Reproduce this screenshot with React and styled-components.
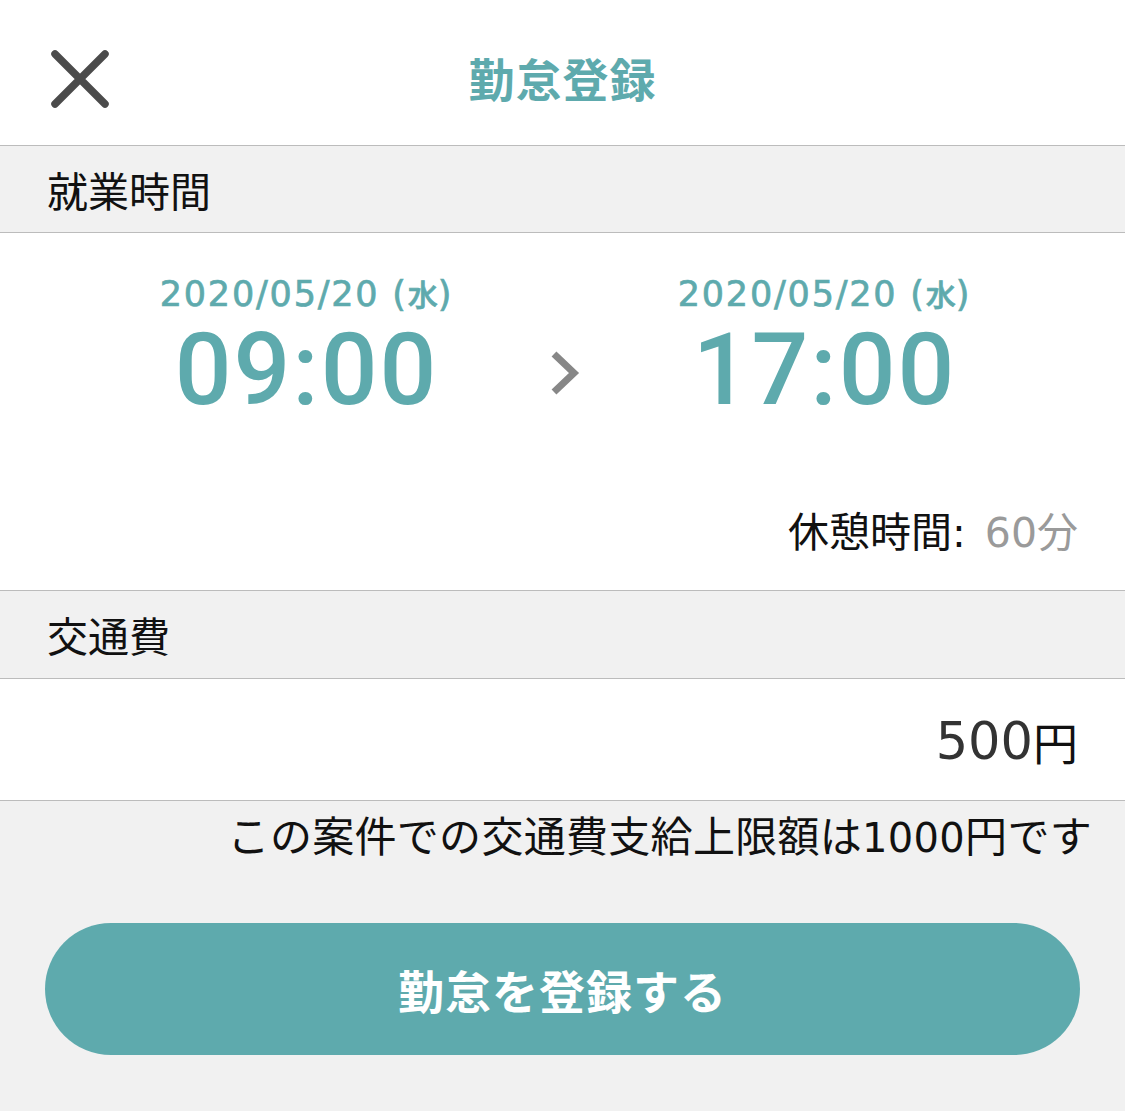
import React from "react";
import styled, { createGlobalStyle } from "styled-components";

const teal = "#5eaaad";
const line = "#bcbcbc";
const grayBg = "#f1f1f1";
const latin = `"DejaVu Sans", "Noto Sans CJK JP", sans-serif`;

const Global = createGlobalStyle`
  html, body { margin: 0; padding: 0; background: ${grayBg}; }
  body {
    font-family: "Noto Sans CJK JP", sans-serif;
    color: #111;
  }
  * { box-sizing: border-box; }
`;

const Page = styled.div`
  width: 1125px;
  min-height: 1111px;
  background: ${grayBg};
  display: flex;
  flex-direction: column;
`;

const Header = styled.header`
  height: 146px;
  background: #fff;
  border-bottom: 1px solid ${line};
  display: grid;
  grid-template-columns: 1fr auto 1fr;
  align-items: center;
  padding: 8px 0 0 51px;
`;

const CloseButton = styled.button`
  width: 58px;
  height: 58px;
  padding: 0;
  border: none;
  background: none;
  display: flex;
  margin-top: 4px;
`;

const Title = styled.h1`
  margin: 0 0 0 -51px;
  font-size: 46px;
  font-weight: 700;
  color: ${teal};
  letter-spacing: 1px;
  line-height: 1;
`;

const SectionHeader = styled.div`
  height: ${(p) => p.$h || 87}px;
  background: ${grayBg};
  border-bottom: 1px solid ${line};
  display: flex;
  align-items: center;
  padding-left: 47px;
  font-size: 41px;
  line-height: 1;
  color: #111;
`;

const TimeBlock = styled.section`
  background: #fff;
  border-bottom: 1px solid ${line};
  height: 358px;
  display: flex;
  flex-direction: column;
`;

const TimeRow = styled.div`
  display: flex;
  justify-content: center;
  align-items: center;
  gap: 94px;
  padding: 43px 0 0 6px;
`;

const TimeColumn = styled.div`
  width: 300px;
  display: flex;
  flex-direction: column;
  align-items: center;
`;

const DateText = styled.div`
  font-family: ${latin};
  font-size: 35px;
  color: ${teal};
  line-height: 35px;
  letter-spacing: 1.8px;
  white-space: nowrap;
  -webkit-text-stroke: 0.7px ${teal};
`;

const Weekday = styled.span`
  font-family: "Noto Sans CJK JP", sans-serif;
  font-size: 30px;
  font-weight: 500;
  letter-spacing: 0;
`;

const TimeText = styled.div`
  font-family: Roboto, "Noto Sans CJK JP", sans-serif;
  font-size: 100px;
  font-weight: 500;
  letter-spacing: 2px;
  color: ${teal};
  line-height: 1;
  margin-top: 8px;
`;

const Arrow = styled.svg`
  width: 30px;
  height: 46px;
  margin-top: 50px;
  flex-shrink: 0;
`;

const BreakRow = styled.div`
  margin-top: auto;
  padding: 0 47px 36px 0;
  text-align: right;
  font-size: 41px;
  line-height: 41px;
  color: #111;
`;

const Colon = styled.span`
  font-family: ${latin};
  letter-spacing: 3px;
`;

const Muted = styled.span`
  color: #9a9a9a;
`;

const Num = styled.span`
  font-family: ${latin};
  font-size: ${(p) => p.$size}px;
`;

const FareRow = styled.div`
  height: 122px;
  background: #fff;
  border-bottom: 1px solid ${line};
  display: flex;
  align-items: center;
  justify-content: flex-end;
  padding: 4px 47px 0 0;
  font-size: 45px;
  line-height: 1;
  color: #333;
`;

const Unit = styled.span`
  color: #111;
`;

const Note = styled.p`
  margin: 12px 0 0;
  padding-right: 33px;
  text-align: right;
  font-size: 42px;
  line-height: 42px;
  letter-spacing: 0.3px;
  color: #111;
  white-space: nowrap;
`;

const SubmitButton = styled.button`
  margin: 64px 45px 0;
  height: 132px;
  border: none;
  border-radius: 66px;
  background: ${teal};
  color: #fff;
  font-family: "Noto Sans CJK JP", sans-serif;
  font-size: 46px;
  font-weight: 700;
  letter-spacing: 1px;
`;

export default function App() {
  return (
    <Page>
      <Global />
      <Header>
        <CloseButton aria-label="閉じる">
          <svg width="58" height="58" viewBox="0 0 58 58">
            <path
              d="M4 4 L54 54 M54 4 L4 54"
              stroke="#4b4b4b"
              strokeWidth="7.5"
              strokeLinecap="round"
            />
          </svg>
        </CloseButton>
        <Title>勤怠登録</Title>
        <div />
      </Header>

      <SectionHeader>就業時間</SectionHeader>
      <TimeBlock>
        <TimeRow>
          <TimeColumn>
            <DateText>
              2020/05/20 (<Weekday>水</Weekday>)
            </DateText>
            <TimeText>09:00</TimeText>
          </TimeColumn>
          <Arrow viewBox="0 0 30 46">
            <path d="M3 4 L23 23 L3 42" fill="none" stroke="#878787" strokeWidth="7" />
          </Arrow>
          <TimeColumn>
            <DateText>
              2020/05/20 (<Weekday>水</Weekday>)
            </DateText>
            <TimeText>17:00</TimeText>
          </TimeColumn>
        </TimeRow>
        <BreakRow>
          休憩時間<Colon>: </Colon>
          <Muted>
            <Num $size={41}>60</Num>分
          </Muted>
        </BreakRow>
      </TimeBlock>

      <SectionHeader $h={88}>交通費</SectionHeader>
      <FareRow>
        <Num $size={51}>500</Num>
        <Unit>円</Unit>
      </FareRow>
      <Note>
        この案件での交通費支給上限額は<Num $size={40}>1000</Num>円です
      </Note>
      <SubmitButton>勤怠を登録する</SubmitButton>
    </Page>
  );
}
